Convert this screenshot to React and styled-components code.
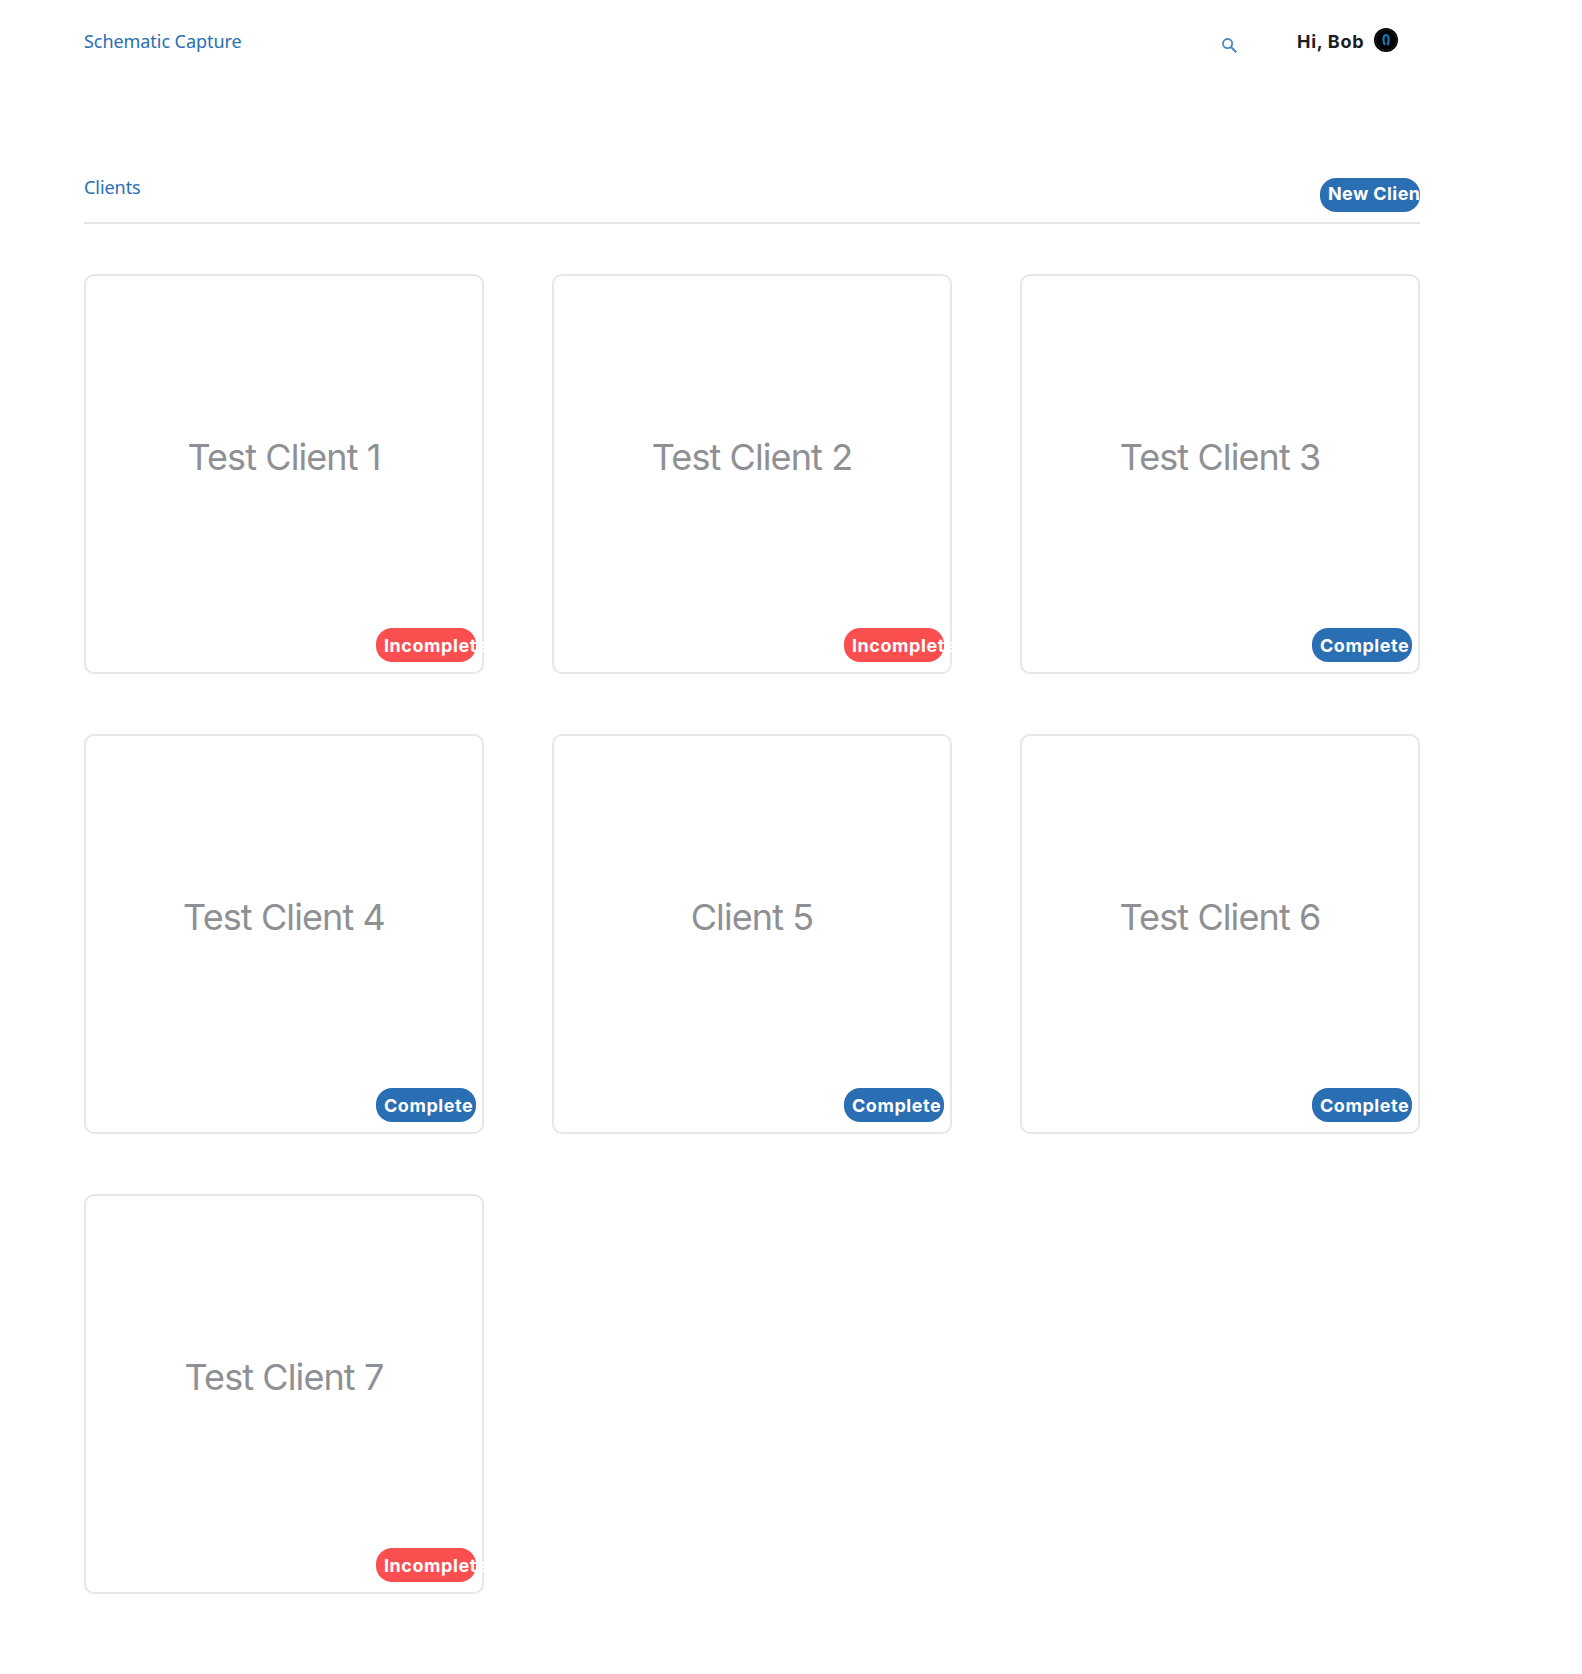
import React from "react";
import styled, { createGlobalStyle } from "styled-components";

const GlobalStyle = createGlobalStyle`
  * { box-sizing: border-box; }
  body {
    margin: 0;
    background: #fff;
    font-family: Inter, "Liberation Sans", sans-serif;
  }
`;

const Page = styled.div`
  width: 1336px;
  min-height: 1674px;
  margin-left: 84px;
`;

const TopBar = styled.header`
  display: flex;
  align-items: flex-start;
  height: 178px;
  padding: 28px 22px 0 0;
`;

const Heading = styled.h1`
  margin: 0;
  font: 400 18px/26px "Noto Sans", sans-serif;
  letter-spacing: -0.06px;
  color: #2a6eb4;
`;

const SearchButton = styled.button`
  display: flex;
  margin: 10px 60px 0 auto;
  padding: 0;
  border: 0;
  background: none;
`;

const User = styled.div`
  display: flex;
  align-items: flex-start;
  gap: 9px;
`;

const Greeting = styled.span`
  width: 68px;
  font-size: 18px;
  font-weight: 650;
  line-height: 27px;
  letter-spacing: 0.7px;
  white-space: nowrap;
  color: #1b1c24;
`;

const Section = styled.div`
  display: flex;
  justify-content: space-between;
  align-items: flex-start;
  height: 46px;
  border-bottom: 2px solid #e5e5e5;
`;

const SectionTitle = styled(Heading)`
  margin-top: -4px;
`;

const Pill = styled.div`
  width: 100px;
  height: 34px;
  padding-left: 8px;
  border-radius: 16px;
  background: ${(p) => p.$color};
  color: #fff;
  font-size: 18px;
  font-weight: 700;
  line-height: ${(p) => p.$line || 35}px;
  letter-spacing: ${(p) => p.$tracking || "0.55px"};
  white-space: nowrap;
`;

const Grid = styled.main`
  display: grid;
  grid-template-columns: repeat(3, 400px);
  gap: 60px 68px;
  padding-top: 50px;
`;

const Card = styled.article`
  display: flex;
  flex-direction: column;
  height: 400px;
  padding: 0 6px 10px;
  border: 2px solid #e7e7e8;
  border-radius: 10px;
`;

const ClientName = styled.h2`
  margin: 159px 0 auto;
  font-size: 36px;
  font-weight: 430;
  line-height: 44px;
  letter-spacing: -0.9px;
  text-align: center;
  color: #8f9094;
`;

const Status = styled(Pill)`
  align-self: flex-end;
`;

const clients = [
  { name: "Test Client 1", done: false },
  { name: "Test Client 2", done: false },
  { name: "Test Client 3", done: true },
  { name: "Test Client 4", done: true },
  { name: "Client 5", done: true },
  { name: "Test Client 6", done: true },
  { name: "Test Client 7", done: false },
];

const SearchIcon = () => (
  <svg width="15" height="15" viewBox="0 0 15 15" fill="none" stroke="#4c87c6" strokeWidth="1.8">
    <circle cx="5.6" cy="5.6" r="4.6" />
    <path d="M9 9l5.2 5.2" strokeWidth="2.2" />
  </svg>
);

const Avatar = () => (
  <svg width="24" height="24" viewBox="0 0 24 24">
    <circle cx="12" cy="12" r="12" fill="#000" />
    <circle cx="12" cy="12" r="10.2" fill="none" stroke="#555" strokeWidth="0.6" strokeDasharray="2 1" />
    <path
      d="M11 16.8C8.8 14.5 8.8 7 12 7s3.4 7 1.3 10.2"
      fill="none"
      stroke="#127dbb"
      strokeWidth="2.1"
    />
  </svg>
);

export default function App() {
  return (
    <>
      <GlobalStyle />
      <Page>
        <TopBar>
          <Heading>Schematic Capture</Heading>
          <SearchButton aria-label="Search">
            <SearchIcon />
          </SearchButton>
          <User>
            <Greeting>Hi, Bob</Greeting>
            <Avatar />
          </User>
        </TopBar>
        <Section>
          <SectionTitle as="h2">Clients</SectionTitle>
          <Pill $color="#2a6eb4" $line={32} $tracking="0.4px">New Client</Pill>
        </Section>
        <Grid>
          {clients.map(({ name, done }) => (
            <Card key={name}>
              <ClientName>{name}</ClientName>
              <Status $color={done ? "#2a6eb4" : "#fb4e4f"}>
                {done ? "Complete" : "Incomplete"}
              </Status>
            </Card>
          ))}
        </Grid>
      </Page>
    </>
  );
}
